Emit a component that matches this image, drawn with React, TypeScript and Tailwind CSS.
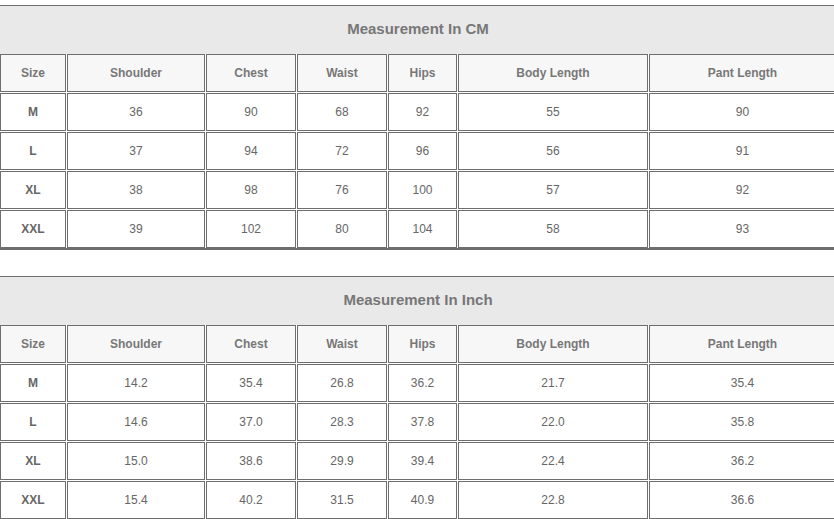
import React from "react";

const headers = ["Size", "Shoulder", "Chest", "Waist", "Hips", "Body Length", "Pant Length"];

const cmRows = [
  ["M", "36", "90", "68", "92", "55", "90"],
  ["L", "37", "94", "72", "96", "56", "91"],
  ["XL", "38", "98", "76", "100", "57", "92"],
  ["XXL", "39", "102", "80", "104", "58", "93"],
];

const inchRows = [
  ["M", "14.2", "35.4", "26.8", "36.2", "21.7", "35.4"],
  ["L", "14.6", "37.0", "28.3", "37.8", "22.0", "35.8"],
  ["XL", "15.0", "38.6", "29.9", "39.4", "22.4", "36.2"],
  ["XXL", "15.4", "40.2", "31.5", "40.9", "22.8", "36.6"],
];

const SizeTable: React.FC<{ title: string; rows: string[][] }> = ({ title, rows }) => {
  return (
    <div className="w-[836px] border-t border-b-2 border-[#6e6e6e]">
      <div className="h-[48px] pb-[2px] bg-[#e9e9e9] flex items-center justify-center text-[15px] font-bold text-[#777]">
        {title}
      </div>
      <div className="grid grid-cols-[66px_138px_90px_90px_69px_190px_187px] gap-x-[1px] gap-y-[1px]">
        {headers.map((h) => (
          <div
            key={h}
            className="h-[38px] border border-[#6e6e6e] bg-[#f7f7f7] flex items-center justify-center text-[12px] font-bold text-[#777]"
          >
            {h}
          </div>
        ))}
        {rows.map((row) =>
          row.map((cell, i) => (
            <div
              key={row[0] + i}
              className={
                i === 0
                  ? "h-[38px] border border-[#6e6e6e] bg-white flex items-center justify-center text-[12px] font-bold text-[#666]"
                  : "h-[38px] border border-[#6e6e6e] bg-white flex items-center justify-center text-[12px] text-[#666]"
              }
            >
              {cell}
            </div>
          ))
        )}
      </div>
    </div>
  );
};

export default function App() {
  return (
    <div
      className="w-[834px] h-[519px] overflow-hidden bg-white pt-[5px] flex flex-col gap-[26px]"
      style={{ fontFamily: '"Liberation Sans", Arial, sans-serif' }}
    >
      <SizeTable title="Measurement In CM" rows={cmRows} />
      <SizeTable title="Measurement In Inch" rows={inchRows} />
    </div>
  );
}
